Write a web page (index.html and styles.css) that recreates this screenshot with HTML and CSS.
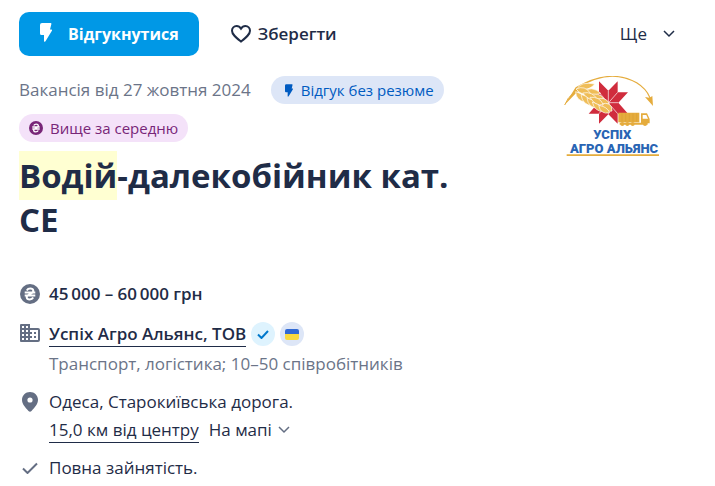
FILE: index.html
```html
<!DOCTYPE html>
<html lang="uk">
<head>
<meta charset="utf-8">
<meta name="viewport" content="width=device-width, initial-scale=1">
<title>Водій-далекобійник кат. СЕ</title>
<link rel="stylesheet" href="styles.css">
</head>
<body>
<svg class="defs" aria-hidden="true">
  <symbol id="bolt" viewBox="0 0 12 19"><path d="M2 0h8.600q1 0 .8 1L10 6.500h1.200q1.200 0 .7 1.200L5.500 18.200q-1.500 1.500-1.500-.4V12H1.500Q0 12 0 10.500V2Q0 0 2 0z"/></symbol>
  <symbol id="hryvnia" viewBox="0 0 20 20"><circle cx="10" cy="10" r="10"/><path class="cut" d="M6.800 6.400C7.600 5 9 4.500 10.300 4.500c3.600 0 3.900 3.400 1.200 4.700l-3 1.600c-2.700 1.300-2.400 4.700 1.200 4.700 1.300 0 2.700-.5 3.500-1.900M4.700 8.600h10.600M4.700 11.400h10.600"/></symbol>
  <symbol id="chevron" viewBox="0 0 12 8"><path d="M1 1l5 5 5-5"/></symbol>
</svg>
<main class="vacancy">
  <header class="toolbar">
    <button class="btn apply" type="button"><svg class="bolt"><use href="#bolt"/></svg>Відгукнутися</button>
    <button class="btn save" type="button"><svg class="heart" viewBox="0 0 20 18"><path d="M10 16.600C5 12.500 1 9.400 1 5.800 1 3 3 1 5.600 1 7.400 1 9 2 10 3.600 11 2 12.600 1 14.400 1 17 1 19 3 19 5.800c0 3.600-4 6.700-9 10.800z"/></svg>Зберегти</button>
    <button class="btn more" type="button">Ще<svg class="chevron"><use href="#chevron"/></svg></button>
  </header>
  <div class="intro">
    <div class="lead">
      <div class="tags">
        <span class="date">Вакансія від 27 жовтня 2024</span>
        <span class="tag blue"><svg class="bolt small"><use href="#bolt"/></svg>Відгук без резюме</span>
        <span class="tag purple"><svg class="coin small"><use href="#hryvnia"/></svg>Вище за середню</span>
      </div>
      <h1><mark>Водій</mark>-далекобійник кат. СЕ</h1>
    </div>
    <svg class="logo" viewBox="27 33 288 243" role="img" aria-label="Успіх Агро Альянс">
      <path fill="#e5ac3d" d="M67 71Q164 8 244 55 272 72 283 98L270 96 294 123 292 93 286 97Q275 70 246 52 164 6 62 67L28 121 67 80z"/>
      <path fill="#d02c3d" d="M132 49L160 77 188 49V82H219L190 113 219 146H188V176L160 148 132 176V146H101L130 113 101 82H132z"/>
      <path stroke="#fff" stroke-width="2" d="M160 77V148M130 113H190M132 82L188 146M132 146L188 82"/>
      <path fill="none" stroke="#e5ac3d" stroke-width="3" d="M29 120Q49 70 90 82T160 140"/>
      <g fill="#efbd58" stroke="#fff" stroke-width="2">
        <path d="M65 73Q77 48 119 57 105 78 65 73z"/><path d="M77 81Q113 60 137 85 112 96 77 81z"/><path d="M99 91Q133 79 147 102 125 110 99 91z"/><path d="M117 106Q150 91 163 115 141 126 117 106z"/><path d="M138 117Q171 108 171 138 151 144 138 117z"/>
        <path d="M62 80Q62 107 94 112 96 90 62 80z"/><path d="M78 88Q82 121 113 122 113 98 78 88z"/><path d="M96 98Q99 130 132 130 130 108 96 98z"/><path d="M112 111Q119 141 146 139 146 120 112 111z"/><path d="M131 121Q137 150 164 143 157 125 131 121z"/>
        <path d="M63 72Q90 59 107 86 80 94 63 72z"/><path d="M83 84Q112 78 127 103 103 110 83 84z"/><path d="M105 97Q134 94 145 119 121 124 105 97z"/>
      </g>
      <g fill="#e5ac3d"><path d="M190 143H253V172H190zM258 145H276L284 162V175H258zM194 173H278V179H194z"/><circle cx="202" cy="177" r="6"/><circle cx="217" cy="177" r="6"/><circle cx="233" cy="177" r="6"/><circle cx="270" cy="177" r="6"/></g>
      <path fill="#fff" d="M263 150H274L279 161H263z"/>
      <path stroke="#cf952d" d="M201 145V170M212 145V170M223 145V170M234 145V170M245 145V170"/>
      <g class="logo-text" text-anchor="middle"><text x="172" y="221">УСПІХ</text><text x="177" y="263">АГРО АЛЬЯНС</text></g>
      <path fill="#e5ac3d" d="M35 268H312V273H35z"/>
    </svg>
  </div>
  <ul class="facts">
    <li><svg class="icon coin"><use href="#hryvnia"/></svg><div class="strong">45&#8198;000&#8197;–&#8197;60&#8198;000 грн</div></li>
    <li>
      <svg class="icon building" viewBox="0 0 20 18"><path fill-rule="evenodd" d="M1 0H10V4H18Q20 4 20 6V16Q20 18 18 18H1Q0 18 0 17V1Q0 0 1 0zM2 2V4H4V2zM6 2V4H8V2zM2 6V8H4V6zM6 6V8H8V6zM2 10V12H4V10zM6 10V12H8V10zM2 14V16H4V14zM6 14V16H8V14zM10 6V8H12V10H10V12H12V14H10V16H18V6zM14 8H16V10H14zM14 12H16V14H14z"/></svg>
      <div>
        <div class="company"><a class="strong" href="#company">Успіх Агро Альянс, ТОВ</a>
          <span class="badge verified"><svg class="tick" viewBox="0 0 12 9"><path d="M1 4.500l3.500 3.500L11 1"/></svg></span>
          <span class="badge flagged"><span class="flag"></span></span></div>
        <div class="muted">Транспорт, логістика; 10–50 співробітників</div>
      </div>
    </li>
    <li>
      <svg class="icon pin" viewBox="0 0 16 20"><path fill-rule="evenodd" d="M8 0C3.500 0 0 3.400 0 7.800 0 12 3 15.200 6.500 19q1.500 1.500 3 0C13 15.200 16 12 16 7.800 16 3.400 12.500 0 8 0zM8 5.400a2.600 2.600 0 1 1 0 5.200 2.600 2.600 0 0 1 0-5.200z"/></svg>
      <div>
        <div>Одеса, Старокиївська дорога.</div>
        <div class="place"><a href="#distance">15,0 км від центру</a><button class="map" type="button">На мапі<svg class="chevron"><use href="#chevron"/></svg></button></div>
      </div>
    </li>
    <li><svg class="icon done" viewBox="0 0 16 12"><path d="M1 6.500L5.500 11 15 1.500"/></svg><div>Повна зайнятість.</div></li>
  </ul>
</main>
</body>
</html>
```

FILE: styles.css
```css
* { box-sizing: border-box; }
body {
  margin: 0;
  background: #fff;
  color: #1f2c47;
  font: 17px/28px "Open Sans", "Noto Sans", sans-serif;
}
svg { flex: none; }
.defs { position: absolute; width: 0; height: 0; }
.vacancy { padding: 12px 19px 0; }
button {
  padding: 0;
  border: 0;
  background: none;
  color: inherit;
  font: inherit;
  cursor: pointer;
}
.toolbar { display: flex; align-items: center; }
.btn { display: flex; align-items: center; height: 44px; font-weight: 600; }
.apply {
  gap: 16px;
  padding: 0 20px 0 21px;
  border-radius: 10px;
  background: #0098e6;
  color: #fff;
  font-size: 16px;
  font-weight: 700;
}
.bolt { width: 12px; height: 19px; fill: currentColor; }
.apply .bolt { margin-bottom: 4px; }
.save { gap: 7px; margin-left: 32px; }
.heart { width: 20px; height: 18px; fill: none; stroke: currentColor; stroke-width: 2; }
.more { gap: 16px; margin-left: auto; padding-right: 21px; font-weight: 400; }
.chevron { width: 12px; height: 8px; fill: none; stroke: currentColor; stroke-width: 1.5; }
.intro { display: flex; justify-content: space-between; padding: 20px 36px 0 0; }
.lead { flex: 0 1 450px; }
.tags { display: flex; flex-wrap: wrap; gap: 10px 20px; }
.date, .muted { color: #6b7488; }
.tag {
  display: flex;
  align-items: center;
  height: 28px;
  padding: 0 10px;
  border-radius: 14px;
  font-size: 15px;
}
.blue { gap: 8px; padding-left: 14px; background: #dde6f7; color: #005bc1; }
.purple { gap: 7px; background: #f4e2f9; color: #782678; }
.bolt.small { width: 8px; height: 13px; }
.coin { fill: currentColor; }
.coin.small { width: 14px; height: 14px; }
.cut { fill: none; stroke: #fff; stroke-width: 2; }
.logo { width: 96px; height: 81px; }
.logo-text { fill: #2864b4; font: 900 39px Roboto, "Liberation Sans", sans-serif; }
h1 { margin: 12px 0 0; font-size: 33px; line-height: 44px; font-weight: 700; }
mark { padding: 2px 0; background: #ffffd2; color: inherit; }
.facts {
  display: grid;
  gap: 10px;
  margin: 38px 0 0;
  padding: 0;
  list-style: none;
}
.facts li { display: grid; grid-template-columns: 22px 1fr; gap: 8px; }
.icon { align-self: start; justify-self: center; margin-top: 4px; color: #646e83; fill: currentColor; }
.icon.coin { width: 20px; height: 20px; }
.building { width: 20px; height: 18px; margin-top: 6px; }
.pin { width: 16px; height: 20px; }
.done { width: 16px; height: 12px; margin-top: 8px; fill: none; stroke: currentColor; stroke-width: 2; }
.strong { font-weight: 600; }
.company { display: flex; align-items: center; gap: 5px; height: 32px; }
.facts a { border-bottom: 1px solid currentColor; color: inherit; line-height: 25px; text-decoration: none; }
.badge {
  display: flex;
  align-items: center;
  justify-content: center;
  width: 24px;
  height: 24px;
  border-radius: 50%;
}
.verified { background: #def3fe; color: #0078cc; }
.flagged { background: #dde6f7; }
.tick { width: 12px; height: 9px; fill: none; stroke: currentColor; stroke-width: 2; }
.flag { width: 14px; height: 11px; border-radius: 2px; background: linear-gradient(#3169d3 50%, #f9d93d 50%); }
.place { display: flex; align-items: center; gap: 10px; }
.map { display: flex; align-items: center; gap: 6px; }
.map .chevron { stroke: #646e83; }
```
